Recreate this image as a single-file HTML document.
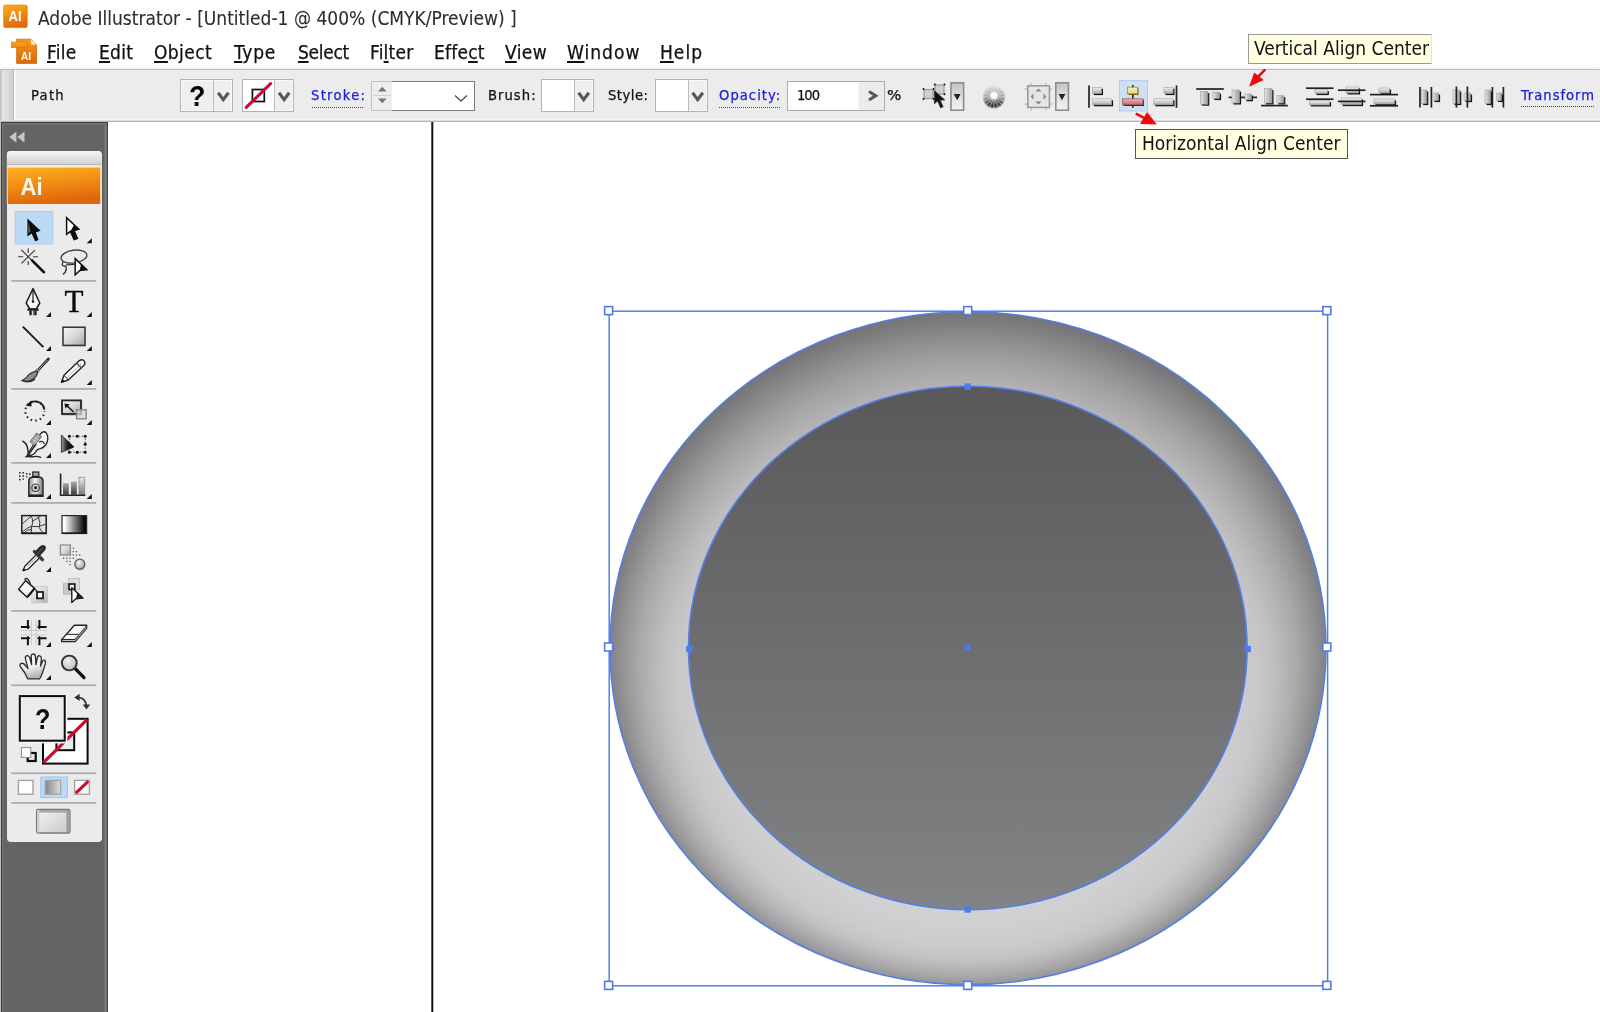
<!DOCTYPE html>
<html lang="en">
<head>
<meta charset="utf-8">
<title>Adobe Illustrator - [Untitled-1 @ 400% (CMYK/Preview) ]</title>
<style>
html,body{margin:0;padding:0}
body{width:1600px;height:1012px;position:relative;overflow:hidden;background:#fff;
  font-family:"DejaVu Sans Condensed","Liberation Sans",sans-serif;color:#111;}
.abs{position:absolute}
.t{position:absolute;white-space:pre;line-height:1;will-change:transform;-webkit-text-stroke:.25px currentColor}
#title{left:37.6px;top:9px;font-size:19px;color:#2e2e2e;-webkit-text-stroke:.1px currentColor}
.menu{top:43px;font-size:19px;color:#111}
.menu u{text-decoration:underline;text-underline-offset:2px;text-decoration-thickness:1.5px}
#cbar{left:0;top:68.6px;width:1600px;height:53.4px;background:linear-gradient(to bottom,#ececec 0,#ececec 48.4px,#f6f6f6 49.6px,#f4f4f4 50.2px,#bcbcbc 50.9px,#b6b6b6 51.5px,#d8d8d8 51.8px);border-top:1.6px solid #bebebe;box-sizing:border-box;box-shadow:0 -1.5px 2px rgba(0,0,0,.07)}
.cl{font-size:14.6px;top:88.2px;color:#111}
.lnk{color:#2020d8}
.dot{position:absolute;height:0;border-top:1.6px dotted #3434dc}
.box{position:absolute;box-sizing:border-box;border:1.2px solid #b2b2b8;background:#efefef;box-shadow:inset 0 0 0 1px #fafafa}
.tip{will-change:transform;position:absolute;box-sizing:border-box;background:#ffffe1;font-size:19px;line-height:1;white-space:pre;color:#111}
#dock{left:.9px;top:122.4px;width:106.9px;height:890px;background:#646464;border-top:1.6px solid #3f3f3f;border-left:1.2px solid #3f3f3f;border-right:1.8px solid #474747;box-sizing:border-box;box-shadow:inset 1.5px 1.5px 0 #727272,inset -3px 0 0 #747474}
#tools{left:7px;top:151px;width:95px;height:691px;background:#ebebeb;border-radius:4px;box-sizing:border-box}
.sep{position:absolute;left:11px;width:86px;height:2px;background:#b2b2b2}
</style>
</head>
<body>
<!-- TITLE -->
<div class="t" id="title">Adobe Illustrator - [Untitled-1 @ 400% (CMYK/Preview) ]</div>
<!-- MENU -->
<div class="t menu" style="left:47px;letter-spacing:.3px"><u>F</u>ile</div>
<div class="t menu" style="left:98.5px;letter-spacing:.3px"><u>E</u>dit</div>
<div class="t menu" style="left:154px;letter-spacing:.4px"><u>O</u>bject</div>
<div class="t menu" style="left:233.5px;letter-spacing:.8px"><u>T</u>ype</div>
<div class="t menu" style="left:297.5px;letter-spacing:-.3px"><u>S</u>elect</div>
<div class="t menu" style="left:369.5px;letter-spacing:.2px">Fi<u>l</u>ter</div>
<div class="t menu" style="left:433.5px;letter-spacing:.2px">Effe<u>c</u>t</div>
<div class="t menu" style="left:505px;letter-spacing:.4px"><u>V</u>iew</div>
<div class="t menu" style="left:567px;letter-spacing:1px"><u>W</u>indow</div>
<div class="t menu" style="left:660px;letter-spacing:1px"><u>H</u>elp</div>
<!-- CONTROL BAR -->
<div class="abs" id="cbar"></div>
<div class="abs" style="left:0;top:70.2px;width:2px;height:50px;background:#c6c6c6"></div>
<div class="abs" style="left:2px;top:70.2px;width:11.2px;height:49.6px;background:linear-gradient(to right,#e6e6e6,#cfcfcf)"></div>
<div class="abs" style="left:13.2px;top:70.2px;width:1.1px;height:49.6px;background:#bcbcbc"></div>
<div class="abs" style="left:14.3px;top:70.2px;width:1.3px;height:49.6px;background:#f8f8f8"></div>
<div class="t cl" style="left:31px;letter-spacing:1.3px">Path</div>
<!-- fill box -->
<div class="box" style="left:180px;top:79px;width:53px;height:33px"></div>
<div class="abs" style="left:213px;top:80px;width:1px;height:31px;background:#bdbdbd"></div>
<div class="t" style="left:188.6px;top:81.6px;font-size:29px;font-weight:bold;-webkit-text-stroke:0;transform:scaleX(.92);transform-origin:0 0;font-family:'Liberation Sans','DejaVu Sans',sans-serif;color:#000">?</div>
<!-- stroke box -->
<div class="box" style="left:242px;top:79px;width:52px;height:33px"></div>
<div class="abs" style="left:243px;top:80px;width:31px;height:31px;background:#fff"></div>
<div class="abs" style="left:274px;top:80px;width:1px;height:31px;background:#bdbdbd"></div>
<div class="t cl lnk" style="left:311px;letter-spacing:1.3px">Stroke:</div>
<div class="dot" style="left:312px;top:106.7px;width:51px"></div>
<!-- stroke combo -->
<div class="abs" style="left:371px;top:81px;width:22px;height:30px;box-sizing:border-box;border:1px solid #c2c2c2;background:#ededed"></div>
<div class="abs" style="left:374px;top:95px;width:17px;height:1px;background:#cfcfcf"></div>
<div class="abs" style="left:392px;top:81px;width:83px;height:30px;box-sizing:border-box;border:1.5px solid #7d7d7d;border-left:none;background:#fff"></div>
<div class="t cl" style="left:488px;letter-spacing:1.05px">Brush:</div>
<div class="box" style="left:541px;top:79px;width:53px;height:33px"></div>
<div class="abs" style="left:542px;top:80px;width:32px;height:31px;background:#fff"></div>
<div class="abs" style="left:574px;top:80px;width:1px;height:31px;background:#bdbdbd"></div>
<div class="t cl" style="left:608px;letter-spacing:.5px">Style:</div>
<div class="box" style="left:655px;top:79px;width:53px;height:33px"></div>
<div class="abs" style="left:656px;top:80px;width:32px;height:31px;background:#fff"></div>
<div class="abs" style="left:688px;top:80px;width:1px;height:31px;background:#bdbdbd"></div>
<div class="t cl lnk" style="left:719.4px;letter-spacing:1.05px">Opacity:</div>
<div class="dot" style="left:719px;top:106.7px;width:61px"></div>
<div class="abs" style="left:787px;top:81px;width:98px;height:30px;box-sizing:border-box;border:1px solid #ababab;background:linear-gradient(to right,#fff 0,#fff 70px,#ececec 71px,#ececec 100%)"></div>
<div class="t cl" style="left:797px;letter-spacing:-1px">100</div>
<div class="t cl" style="left:886.6px;transform:scaleX(1.15);transform-origin:0 0">%</div>
<div class="t cl lnk" style="left:1521px;letter-spacing:1px">Transform</div>
<div class="dot" style="left:1521px;top:105.6px;width:73px"></div>
<!-- tooltips -->
<div class="tip" style="left:1248px;top:34px;width:184px;height:30px;border:1px solid #9a9a9a;border-right-color:#e8e8c8;padding:3.8px 0 0 5px">Vertical Align Center</div>
<div class="tip" style="left:1135px;top:129px;width:213px;height:30px;border:1px solid #555;padding:3.5px 0 0 6px">Horizontal Align Center</div>
<!-- DOCK -->
<div class="abs" id="dock"></div>
<div class="abs" style="left:0;top:122px;width:.9px;height:890px;background:#c0c0c0"></div>
<div class="abs" id="tools"></div>
<!-- ARTWORK + ICONS -->
<svg class="abs" id="art" style="left:0;top:0;will-change:transform" width="1600" height="1012" viewBox="0 0 1600 1012">
<defs>
<radialGradient id="gOuter" gradientUnits="userSpaceOnUse" cx="968" cy="648" r="380" fx="968" fy="796.9" gradientTransform="translate(0 648) scale(1 0.94) translate(0 -648)">
  <stop offset="0.3" stop-color="#d8d8da"/>
  <stop offset="0.55" stop-color="#d2d2d4"/>
  <stop offset="0.66" stop-color="#cfcfd1"/>
  <stop offset="0.72" stop-color="#ccccce"/>
  <stop offset="0.76" stop-color="#c8c8ca"/>
  <stop offset="0.79" stop-color="#c3c3c5"/>
  <stop offset="0.81" stop-color="#bdbdbf"/>
  <stop offset="0.83" stop-color="#b6b6b8"/>
  <stop offset="0.85" stop-color="#afafb1"/>
  <stop offset="0.865" stop-color="#a9a9ab"/>
  <stop offset="0.88" stop-color="#a2a2a4"/>
  <stop offset="0.895" stop-color="#9b9b9d"/>
  <stop offset="0.91" stop-color="#939395"/>
  <stop offset="0.925" stop-color="#8b8b8d"/>
  <stop offset="0.94" stop-color="#838385"/>
  <stop offset="0.955" stop-color="#7d7d7f"/>
  <stop offset="1.0" stop-color="#777779"/>
</radialGradient>
<linearGradient id="gInner" x1="0" y1="0" x2="0" y2="1">
  <stop offset="0" stop-color="#59595b"/>
  <stop offset="1" stop-color="#828385"/>
</linearGradient>
<linearGradient id="gBar" x1="0" y1="0" x2="0" y2="1"><stop offset="0" stop-color="#f4f4f4"/><stop offset="1" stop-color="#a9a9a9"/></linearGradient>
<linearGradient id="gBarV" x1="0" y1="0" x2="1" y2="0"><stop offset="0" stop-color="#e6e6e6"/><stop offset="1" stop-color="#9c9c9c"/></linearGradient>
<linearGradient id="gYel" x1="0" y1="0" x2="0" y2="1"><stop offset="0" stop-color="#fbf3b8"/><stop offset="1" stop-color="#e6d27c"/></linearGradient>
<linearGradient id="gRed" x1="0" y1="0" x2="0" y2="1"><stop offset="0" stop-color="#eeb4b4"/><stop offset="1" stop-color="#c06a6a"/></linearGradient>
<linearGradient id="gDrop" x1="0" y1="0" x2="0" y2="1"><stop offset="0" stop-color="#c4c4c4"/><stop offset="0.5" stop-color="#dedede"/><stop offset="1" stop-color="#f4f4f4"/></linearGradient>
<linearGradient id="gWheel" x1="0" y1="0" x2="0" y2="1"><stop offset="0" stop-color="#dedede"/><stop offset="0.5" stop-color="#a6a6a6"/><stop offset="0.85" stop-color="#343434"/><stop offset="1" stop-color="#101010"/></linearGradient>
<radialGradient id="gWheelF"><stop offset="0.72" stop-color="#ebebeb" stop-opacity="0"/><stop offset="1" stop-color="#ebebeb" stop-opacity="1"/></radialGradient>
<radialGradient id="gWheelC"><stop offset="0" stop-color="#fff"/><stop offset="0.55" stop-color="#fff"/><stop offset="1" stop-color="#fff" stop-opacity="0"/></radialGradient>
<linearGradient id="gOr" x1="0" y1="0" x2="0.3" y2="1"><stop offset="0" stop-color="#fbb01c"/><stop offset="0.5" stop-color="#f08c12"/><stop offset="1" stop-color="#e26c0a"/></linearGradient>
<linearGradient id="gOr2" x1="0" y1="0" x2="0" y2="1"><stop offset="0" stop-color="#f59a18"/><stop offset="1" stop-color="#dc650a"/></linearGradient>
<linearGradient id="gOrTab" x1="0" y1="0" x2="0" y2="1"><stop offset="0" stop-color="#f8a624"/><stop offset="1" stop-color="#e8820e"/></linearGradient>
<linearGradient id="gGrip" x1="0" y1="0" x2="0" y2="1"><stop offset="0" stop-color="#f6f6f6"/><stop offset="1" stop-color="#cdced0"/></linearGradient>
<linearGradient id="gBand" x1="0" y1="0" x2="0.25" y2="1"><stop offset="0" stop-color="#fdb022"/><stop offset="0.5" stop-color="#f18e14"/><stop offset="1" stop-color="#e0660c"/></linearGradient>
<linearGradient id="gRectTool" x1="0" y1="0" x2="1" y2="1"><stop offset="0" stop-color="#f6f6f6"/><stop offset="0.5" stop-color="#d8d8d8"/><stop offset="1" stop-color="#a4a4a4"/></linearGradient>
<linearGradient id="gFT" x1="0" y1="0" x2="1" y2="0"><stop offset="0" stop-color="#9a9a9a"/><stop offset="0.45" stop-color="#222"/><stop offset="1" stop-color="#000"/></linearGradient>
<linearGradient id="gCan" x1="0" y1="0" x2="1" y2="0"><stop offset="0" stop-color="#8c8c8c"/><stop offset="0.45" stop-color="#f4f4f4"/><stop offset="1" stop-color="#7a7a7a"/></linearGradient>
<linearGradient id="gBarD" x1="0" y1="0" x2="0" y2="1"><stop offset="0" stop-color="#a8a8a8"/><stop offset="1" stop-color="#3c3c3c"/></linearGradient>
<linearGradient id="gBarL" x1="0" y1="0" x2="0" y2="1"><stop offset="0" stop-color="#eaeaea"/><stop offset="1" stop-color="#7c7c7c"/></linearGradient>
<linearGradient id="gBW" x1="0" y1="0" x2="1" y2="0"><stop offset="0.1" stop-color="#fff"/><stop offset="0.9" stop-color="#0a0a0a"/></linearGradient>
<radialGradient id="gBall" cx="0.4" cy="0.35" r="0.7"><stop offset="0" stop-color="#f4f4f4"/><stop offset="1" stop-color="#a0a0a0"/></radialGradient>
<linearGradient id="gHand" x1="0" y1="0" x2="0.3" y2="1"><stop offset="0" stop-color="#fff"/><stop offset="0.6" stop-color="#f0f0f0"/><stop offset="1" stop-color="#b4b4b4"/></linearGradient>
<radialGradient id="gLens" cx="0.4" cy="0.35" r="0.75"><stop offset="0" stop-color="#efefef"/><stop offset="1" stop-color="#b8b8b8"/></radialGradient>
<linearGradient id="gGradBtn" x1="0" y1="0" x2="1" y2="0"><stop offset="0" stop-color="#858585"/><stop offset="1" stop-color="#dedede"/></linearGradient>
<linearGradient id="gScreen" x1="0" y1="0" x2="1" y2="1"><stop offset="0" stop-color="#f4f4f4"/><stop offset="1" stop-color="#c8c8c8"/></linearGradient>
<linearGradient id="gTopShade" gradientUnits="userSpaceOnUse" x1="0" y1="312" x2="0" y2="640"><stop offset="0" stop-color="#000" stop-opacity="0.06"/><stop offset="0.3" stop-color="#000" stop-opacity="0.06"/><stop offset="1" stop-color="#000" stop-opacity="0"/></linearGradient>
</defs>
<!-- ARTWORK-BEGIN -->
<line x1="432.3" y1="122" x2="432.3" y2="1012" stroke="#111" stroke-width="2"/>
<ellipse cx="968" cy="648.2" rx="358" ry="336.5" fill="url(#gOuter)" stroke="#5480e6" stroke-width="1.6"/>
<ellipse cx="968" cy="648.2" rx="357.4" ry="336" fill="url(#gTopShade)"/>
<ellipse cx="967.8" cy="648" rx="279.3" ry="261.7" fill="url(#gInner)" stroke="#5480e6" stroke-width="1.6"/>
<rect x="609.2" y="311.2" width="718.4" height="674.6" fill="none" stroke="#5580e4" stroke-width="1.5"/>
<g fill="#fff" stroke="#4f7be2" stroke-width="1.6">
  <rect x="604.6" y="306.6" width="8" height="8"/><rect x="963.7" y="306.6" width="8" height="8"/><rect x="1322.8" y="306.6" width="8" height="8"/>
  <rect x="604.6" y="643" width="8" height="8"/><rect x="1322.8" y="643" width="8" height="8"/>
  <rect x="604.6" y="981.4" width="8" height="8"/><rect x="963.7" y="981.4" width="8" height="8"/><rect x="1322.8" y="981.4" width="8" height="8"/>
</g>
<g fill="#4a7df0">
  <rect x="964.5" y="383.4" width="6.4" height="6.4"/><rect x="964.5" y="906.3" width="6.4" height="6.4"/>
  <rect x="686.2" y="645.8" width="6.4" height="6.4"/><rect x="1244.5" y="645.8" width="6.4" height="6.4"/>
  <rect x="964.7" y="644.6" width="6" height="6"/>
</g>
<!-- ARTWORK-END -->
<!-- APPICONS-BEGIN -->
<g id="appicons" font-family="'Liberation Sans','DejaVu Sans',sans-serif" font-weight="bold" fill="#fff">
<rect x="4.2" y="6" width="23.4" height="22.2" rx="1.5" fill="#d9a060" opacity=".45"/>
<rect x="3.6" y="5" width="23.6" height="22.4" rx="1.5" fill="url(#gOr)" stroke="#e07a10" stroke-width=".6"/>
<text x="8.6" y="20.6" font-size="14.5" textLength="13" lengthAdjust="spacingAndGlyphs">AI</text>
<path d="M16.6,39.2 L31,39.2 L36.6,44.8 L36.6,63.4 L16.6,63.4 Z" fill="url(#gOr2)" stroke="#c85c08" stroke-width=".7"/>
<path d="M31,39.2 L36.6,44.8 L31,44.8 Z" fill="#fdf4e6" stroke="#e0b080" stroke-width=".5"/>
<rect x="11.4" y="42" width="15.6" height="5.8" fill="url(#gOrTab)" stroke="#d87410" stroke-width=".5"/>
<text x="21" y="59.6" font-size="11" textLength="10" lengthAdjust="spacingAndGlyphs">AI</text>
</g>
<!-- APPICONS-END -->
<!-- CBAR-ICONS-BEGIN -->
<g id="cbicons">
<polyline points="218.2,92.8 223.3,99.6 228.4,92.8" fill="none" stroke="#585858" stroke-width="3.1" stroke-linejoin="miter"/>
<polyline points="279,92.8 284.1,99.6 289.2,92.8" fill="none" stroke="#585858" stroke-width="3.1" stroke-linejoin="miter"/>
<polyline points="578.6,92.8 583.7,99.6 588.8,92.8" fill="none" stroke="#585858" stroke-width="3.1" stroke-linejoin="miter"/>
<polyline points="692.6,92.8 697.7,99.6 702.8,92.8" fill="none" stroke="#585858" stroke-width="3.1" stroke-linejoin="miter"/>
<polyline points="455,95.5 461.0,101 467,95.5" fill="none" stroke="#555" stroke-width="1.4" stroke-linejoin="miter"/>
<polyline points="869,91.4 875.8,95.7 869,100" fill="none" stroke="#585858" stroke-width="3"/>
<rect x="252.4" y="89.5" width="11.9" height="12" fill="none" stroke="#111" stroke-width="1.7"/>
<line x1="246.2" y1="107.4" x2="270.6" y2="83.6" stroke="#cc0a34" stroke-width="3" stroke-linecap="round"/>
<polygon points="378,91.6 382.3,86.8 386.6,91.6" fill="#747474"/><polygon points="378,98.4 382.3,103.2 386.6,98.4" fill="#747474"/>
<g><rect x="924" y="89.5" width="9" height="9" fill="#cfcfcf" stroke="#9a9a9a" stroke-width="1.2"/><rect x="935" y="85" width="9" height="9" fill="#cfcfcf" stroke="#9a9a9a" stroke-width="1.2"/><g fill="#111"><circle cx="923.5" cy="89" r="1"/><circle cx="933.5" cy="89" r="1"/><circle cx="923.5" cy="99" r="1"/><circle cx="933.5" cy="99" r="1"/><circle cx="934.8" cy="84.5" r="1"/><circle cx="944.5" cy="84.5" r="1"/><circle cx="944.5" cy="94.3" r="1"/></g><path d="M934.3,90.5 L934.3,104 L937.6,101 L940.6,108 L943.2,106.8 L940.2,100.2 L945,100 Z" fill="#111" stroke="#333" stroke-width="0.6"/></g>
<rect x="951.0" y="82.8" width="12.6" height="27.4" fill="url(#gDrop)" stroke="#8c8c8c" stroke-width="1.6"/>
<polygon points="953.8000000000001,94 960.6,94 957.2,100.3" fill="#222"/>
<rect x="1055.8" y="82.8" width="12.6" height="27.4" fill="url(#gDrop)" stroke="#8c8c8c" stroke-width="1.6"/>
<polygon points="1058.6,94 1065.4,94 1062,100.3" fill="#222"/>
<circle cx="994" cy="97" r="11.5" fill="url(#gWheel)"/>
<g stroke="#ebebeb" stroke-width="1" opacity=".55"><line x1="994" y1="97" x2="1006.0" y2="97.0"/><line x1="994" y1="97" x2="1005.1" y2="101.6"/><line x1="994" y1="97" x2="1002.5" y2="105.5"/><line x1="994" y1="97" x2="998.6" y2="108.1"/><line x1="994" y1="97" x2="994.0" y2="109.0"/><line x1="994" y1="97" x2="989.4" y2="108.1"/><line x1="994" y1="97" x2="985.5" y2="105.5"/><line x1="994" y1="97" x2="982.9" y2="101.6"/><line x1="994" y1="97" x2="982.0" y2="97.0"/><line x1="994" y1="97" x2="982.9" y2="92.4"/><line x1="994" y1="97" x2="985.5" y2="88.5"/><line x1="994" y1="97" x2="989.4" y2="85.9"/><line x1="994" y1="97" x2="994.0" y2="85.0"/><line x1="994" y1="97" x2="998.6" y2="85.9"/><line x1="994" y1="97" x2="1002.5" y2="88.5"/><line x1="994" y1="97" x2="1005.1" y2="92.4"/></g>
<circle cx="994" cy="95.6" r="4.6" fill="url(#gWheelC)"/><circle cx="994" cy="97" r="12.6" fill="url(#gWheelF)"/>
<g stroke="#b5b5b5" stroke-width="1.1"><line x1="1031" y1="82.5" x2="1031" y2="110.5"/><line x1="1046" y1="82.5" x2="1046" y2="110.5"/><line x1="1024.5" y1="89" x2="1052.5" y2="89"/><line x1="1024.5" y1="104" x2="1052.5" y2="104"/></g>
<rect x="1027.8" y="85.8" width="21.6" height="21.6" fill="#e6e6e6" stroke="#9c9c9c" stroke-width="1.6"/>
<g fill="#8a8a8a"><polygon points="1035.2,91.5 1041.8,91.5 1038.5,88.6"/><polygon points="1035.2,101.5 1041.8,101.5 1038.5,104.4"/><polygon points="1033.5,93.2 1033.5,99.8 1030.6,96.5"/><polygon points="1043.5,93.2 1043.5,99.8 1046.4,96.5"/></g>
<rect x="1119.5" y="80.5" width="28" height="30.5" fill="#cfdff3" stroke="#b4cdee" stroke-width="1"/>
<line x1="1089" y1="85.5" x2="1089" y2="107.8" stroke="#222" stroke-width="1.7"/>
<rect x="1093.9" y="88.8" width="9.1" height="6.3" fill="#161616"/><rect x="1092.4" y="87.3" width="9.099999999999909" height="6.299999999999997" fill="url(#gBar)" stroke="#a0a0a0" stroke-width="0.6"/>
<rect x="1093.9" y="100.3" width="19.2" height="6.0" fill="#161616"/><rect x="1092.4" y="98.8" width="19.199999999999818" height="6.0" fill="url(#gBar)" stroke="#a0a0a0" stroke-width="0.6"/>
<line x1="1132.8" y1="85" x2="1132.8" y2="107.8" stroke="#222" stroke-width="1.6"/>
<rect x="1128.5" y="88" width="10" height="7" fill="#6b5a1a"/><rect x="1127.6" y="87.2" width="10" height="6.6" fill="url(#gYel)" stroke="#9a8640" stroke-width="0.8"/>
<rect x="1123.6" y="99.8" width="20.4" height="6.2" fill="#3a1515"/><rect x="1122.6" y="98.8" width="20.4" height="6" fill="url(#gRed)" stroke="#a06060" stroke-width="0.8"/>
<line x1="1176.5" y1="85.5" x2="1176.5" y2="107.8" stroke="#222" stroke-width="1.7"/>
<rect x="1165.5" y="88.8" width="9.0" height="6.3" fill="#161616"/><rect x="1164" y="87.3" width="9" height="6.299999999999997" fill="url(#gBar)" stroke="#a0a0a0" stroke-width="0.6"/>
<rect x="1155.3" y="100.3" width="19.2" height="6.0" fill="#161616"/><rect x="1153.8" y="98.8" width="19.200000000000045" height="6.0" fill="url(#gBar)" stroke="#a0a0a0" stroke-width="0.6"/>
<line x1="1196.2" y1="89" x2="1223.8" y2="89" stroke="#222" stroke-width="1.7"/>
<rect x="1201.9" y="93.1" width="7.4" height="12.6" fill="#161616"/><rect x="1200.4" y="91.6" width="7.399999999999864" height="12.600000000000009" fill="url(#gBarV)" stroke="#a0a0a0" stroke-width="0.6"/>
<rect x="1214.3" y="93.7" width="6.8" height="6.4" fill="#161616"/><rect x="1212.8" y="92.2" width="6.7999999999999545" height="6.3999999999999915" fill="url(#gBarV)" stroke="#a0a0a0" stroke-width="0.6"/>
<line x1="1228.6" y1="97.4" x2="1257" y2="97.4" stroke="#222" stroke-width="1.7"/>
<rect x="1233.5" y="91.5" width="7.6" height="13.0" fill="#161616"/><rect x="1232" y="90" width="7.599999999999909" height="13" fill="url(#gBarV)" stroke="#a0a0a0" stroke-width="0.6"/>
<rect x="1246.5" y="95.5" width="6.4" height="5.8" fill="#161616"/><rect x="1245" y="94" width="6.400000000000091" height="5.799999999999997" fill="url(#gBarV)" stroke="#a0a0a0" stroke-width="0.6"/>
<line x1="1261" y1="105.6" x2="1287.8" y2="105.6" stroke="#222" stroke-width="1.7"/>
<rect x="1265.9" y="90.1" width="7.6" height="14.4" fill="#161616"/><rect x="1264.4" y="88.6" width="7.599999999999909" height="14.400000000000006" fill="url(#gBarV)" stroke="#a0a0a0" stroke-width="0.6"/>
<rect x="1278.5" y="97.1" width="6.8" height="7.4" fill="#161616"/><rect x="1277" y="95.6" width="6.7999999999999545" height="7.400000000000006" fill="url(#gBarV)" stroke="#a0a0a0" stroke-width="0.6"/>
<line x1="1306" y1="88.2" x2="1333.5" y2="88.2" stroke="#222" stroke-width="1.7"/>
<line x1="1306" y1="99.2" x2="1333.5" y2="99.2" stroke="#222" stroke-width="1.7"/>
<rect x="1316.5" y="91.1" width="12.4" height="4.0" fill="#161616"/><rect x="1315" y="89.6" width="12.400000000000091" height="4.0" fill="url(#gBar)" stroke="#a0a0a0" stroke-width="0.6"/>
<rect x="1310.9" y="102.1" width="20.2" height="4.4" fill="#161616"/><rect x="1309.4" y="100.6" width="20.199999999999818" height="4.400000000000006" fill="url(#gBar)" stroke="#a0a0a0" stroke-width="0.6"/>
<rect x="1347.5" y="88.5" width="12.6" height="6.0" fill="#161616"/><rect x="1346" y="87" width="12.599999999999909" height="6" fill="url(#gBar)" stroke="#a0a0a0" stroke-width="0.6"/>
<rect x="1342.7" y="99.5" width="20.4" height="6.6" fill="#161616"/><rect x="1341.2" y="98" width="20.399999999999864" height="6.599999999999994" fill="url(#gBar)" stroke="#a0a0a0" stroke-width="0.6"/>
<line x1="1338" y1="90.2" x2="1365.5" y2="90.2" stroke="#222" stroke-width="1.7"/>
<line x1="1338" y1="101.4" x2="1365.5" y2="101.4" stroke="#222" stroke-width="1.7"/>
<line x1="1370" y1="94.6" x2="1398" y2="94.6" stroke="#222" stroke-width="1.7"/>
<line x1="1370" y1="105.8" x2="1398" y2="105.8" stroke="#222" stroke-width="1.7"/>
<rect x="1380.5" y="89.5" width="10.6" height="5.0" fill="#161616"/><rect x="1379" y="88" width="10.599999999999909" height="5" fill="url(#gBar)" stroke="#a0a0a0" stroke-width="0.6"/>
<rect x="1375.5" y="100.5" width="20.6" height="5.0" fill="#161616"/><rect x="1374" y="99" width="20.59999999999991" height="5" fill="url(#gBar)" stroke="#a0a0a0" stroke-width="0.6"/>
<line x1="1420" y1="87" x2="1420" y2="107.6" stroke="#222" stroke-width="1.7"/>
<line x1="1431.4" y1="87" x2="1431.4" y2="107.6" stroke="#222" stroke-width="1.7"/>
<rect x="1423.1" y="91.5" width="5.2" height="13.6" fill="#161616"/><rect x="1421.6" y="90" width="5.2000000000000455" height="13.599999999999994" fill="url(#gBarV)" stroke="#a0a0a0" stroke-width="0.6"/>
<rect x="1434.5" y="94.5" width="5.6" height="7.6" fill="#161616"/><rect x="1433" y="93" width="5.599999999999909" height="7.599999999999994" fill="url(#gBarV)" stroke="#a0a0a0" stroke-width="0.6"/>
<rect x="1454.5" y="91.5" width="6.8" height="13.6" fill="#161616"/><rect x="1453" y="90" width="6.7999999999999545" height="13.599999999999994" fill="url(#gBarV)" stroke="#a0a0a0" stroke-width="0.6"/>
<rect x="1465.5" y="94.5" width="6.6" height="7.6" fill="#161616"/><rect x="1464" y="93" width="6.599999999999909" height="7.599999999999994" fill="url(#gBarV)" stroke="#a0a0a0" stroke-width="0.6"/>
<line x1="1456.4" y1="86.5" x2="1456.4" y2="107.6" stroke="#222" stroke-width="1.7"/>
<line x1="1467.4" y1="86.5" x2="1467.4" y2="107.6" stroke="#222" stroke-width="1.7"/>
<line x1="1492.4" y1="87" x2="1492.4" y2="107.6" stroke="#222" stroke-width="1.7"/>
<line x1="1503.4" y1="87" x2="1503.4" y2="107.6" stroke="#222" stroke-width="1.7"/>
<rect x="1486.5" y="91.5" width="5.6" height="13.6" fill="#161616"/><rect x="1485" y="90" width="5.599999999999909" height="13.599999999999994" fill="url(#gBarV)" stroke="#a0a0a0" stroke-width="0.6"/>
<rect x="1497.9" y="94.5" width="5.2" height="7.6" fill="#161616"/><rect x="1496.4" y="93" width="5.199999999999818" height="7.599999999999994" fill="url(#gBarV)" stroke="#a0a0a0" stroke-width="0.6"/>
<g fill="#ee0a0a" stroke="none"><line x1="1265.3" y1="69.4" x2="1257" y2="77.8" stroke="#ee0a0a" stroke-width="2.6"/><polygon points="1249.1,86.8 1254.2,72.6 1263.7,79.9"/><line x1="1135.8" y1="113.6" x2="1146" y2="118.8" stroke="#ee0a0a" stroke-width="2.6"/><polygon points="1156.9,124.6 1147,111.9 1140.1,123.9"/></g>
</g>
<!-- CBAR-ICONS-END -->
<!-- TOOLS-BEGIN -->
<g id="tools-svg">
<!-- dock arrows -->
<polygon points="9.4,137 16.4,131.4 16.4,142.8" fill="#c6c6c6"/><polygon points="17.4,137 24.5,131.4 24.5,142.8" fill="#c6c6c6"/>
<!-- header grip + orange band -->
<path d="M6.8,165 L6.8,154.5 Q6.8,151 10.3,151 L98,151 Q101.5,151 101.5,154.5 L101.5,165 Z" fill="url(#gGrip)"/>
<rect x="6.8" y="164" width="94.7" height="1.2" fill="#b4b8bc"/>
<rect x="6.8" y="165.2" width="94.7" height="2.4" fill="#fbe9d2"/>
<rect x="8" y="167.6" width="92.2" height="36.4" fill="url(#gBand)"/>
<rect x="6.8" y="167.6" width="1.2" height="36.4" fill="#f8d0a0"/><rect x="100.2" y="167.6" width="1.3" height="36.4" fill="#f8d0a0"/>
<text x="20.6" y="194.6" font-family="'Liberation Sans','DejaVu Sans',sans-serif" font-weight="bold" font-size="24" fill="#fff8ea" textLength="22" lengthAdjust="spacingAndGlyphs">Ai</text>
<!-- separators -->
<g fill="#adadad">
<rect x="11.2" y="280" width="85" height="1.8"/><rect x="11.2" y="388" width="85" height="1.8"/><rect x="11.2" y="462" width="85" height="1.8"/>
<rect x="11.2" y="502" width="85" height="1.8"/><rect x="11.2" y="610" width="85" height="1.8"/><rect x="11.2" y="684.4" width="85" height="1.8"/>
<rect x="11.2" y="772.4" width="85" height="1.8"/><rect x="11.2" y="802" width="85" height="1.8"/>
</g>
<!-- flyout corner triangles -->
<g fill="#111">
<polygon points="91.8,238.2 91.8,243.2 86.7,243.2"/>
<polygon points="51,312 51,317 46,317"/><polygon points="91.8,312 91.8,317 86.7,317"/>
<polygon points="51,346 51,351 46,351"/><polygon points="91.8,346 91.8,351 86.7,351"/>
<polygon points="91.8,380 91.8,385 86.7,385"/>
<polygon points="51,420 51,425 46,425"/><polygon points="91.8,420 91.8,425 86.7,425"/>
<polygon points="51,453 51,458 46,458"/>
<polygon points="51,494 51,499 46,499"/><polygon points="91.8,494 91.8,499 86.7,499"/>
<polygon points="51,567 51,572 46,572"/>
<polygon points="51,642 51,647 46,647"/><polygon points="91.8,642 91.8,647 86.7,647"/>
<polygon points="51,675 51,680 46,680"/>
</g>
<!-- row1: selection tools -->
<rect x="15.2" y="211.6" width="37.6" height="32.4" fill="#bcdaf5" stroke="#a2ccf2" stroke-width="1"/>
<path d="M27.4,218.6 L27.4,236.4 L31.6,233.4 L35.2,241.2 L38.6,240 L35.8,232.4 L40.6,230.8 Z" fill="#0a0a0a"/>
<path d="M28.4,222 L28.4,233.6 L30.6,231.6 Z" fill="#8a8a8a" opacity=".7"/>
<path d="M66.6,217.8 L66.6,234.2 L70.4,231.4 L74.2,239.6 L77.4,238.4 L74,230.6 L78.8,229.2 Z" fill="#fff" stroke="#0a0a0a" stroke-width="1.5" stroke-linejoin="miter"/>
<path d="M70.4,231.4 L74.2,239.6 L77.4,238.4 L74,230.6 L78.8,229.2 L74,225" fill="#0a0a0a"/>
<!-- row2: magic wand -->
<g stroke="#333" stroke-width="1.1" stroke-linecap="round">
<line x1="28.2" y1="248.8" x2="28.2" y2="252.5"/><line x1="28.2" y1="261.5" x2="28.2" y2="264.6"/>
<line x1="18.6" y1="256.8" x2="22.8" y2="256.8"/><line x1="33.6" y1="256.8" x2="37.6" y2="256.8"/>
<line x1="21.6" y1="250.2" x2="34.8" y2="263.4"/><line x1="34.6" y1="250.4" x2="21.8" y2="263.2"/>
</g>
<line x1="32" y1="260.4" x2="44" y2="272.2" stroke="#111" stroke-width="2.6" stroke-linecap="round"/>
<!-- lasso -->
<ellipse cx="74" cy="256.6" rx="13" ry="6.4" transform="rotate(-8 74 256.6)" fill="none" stroke="#444" stroke-width="1.3"/>
<path d="M63,262 Q61,266 64.4,266 Q67,266 66,270 Q65.4,273 63,274.4" fill="none" stroke="#333" stroke-width="1.4"/>
<path d="M66,264.8 L74.5,264.4" stroke="#333" stroke-width="1.2"/>
<path d="M75.2,258.6 L75.2,274.8 L79.6,270.6 L86.8,269.8 Z" fill="#fff" stroke="#111" stroke-width="1.5"/>
<path d="M79.6,270.6 L86.8,269.8 L81,264.4 Z" fill="#111"/>
</g>
<!-- TOOLS-END -->
<!-- TOOLS2-BEGIN -->
<g id="tools-svg2">
<!-- row3: pen -->
<path d="M33,288.6 L26.2,303 L29.8,309 L36.2,309 L39.8,303 Z" fill="#fafafa" stroke="#1a1a1a" stroke-width="1.5" stroke-linejoin="round"/>
<line x1="33" y1="289" x2="33" y2="300.4" stroke="#1a1a1a" stroke-width="1.2"/><circle cx="33" cy="301.6" r="1.3" fill="#1a1a1a"/>
<rect x="27.4" y="308.6" width="11.2" height="2.2" fill="#1a1a1a"/>
<rect x="29.6" y="310.8" width="6.8" height="4.4" fill="#555"/><rect x="32" y="310.8" width="1.2" height="4.4" fill="#ddd"/><rect x="29.6" y="310.8" width="1.4" height="4.4" fill="#111"/><rect x="35" y="310.8" width="1.4" height="4.4" fill="#111"/>
<!-- T -->
<text x="64.6" y="312.4" font-family="'Liberation Serif','DejaVu Serif',serif" font-size="31" fill="#0a0a0a" stroke="#0a0a0a" stroke-width=".35" textLength="19" lengthAdjust="spacingAndGlyphs">T</text>
<!-- row4: line, rect -->
<line x1="22.8" y1="326.6" x2="43.4" y2="347.2" stroke="#1a1a1a" stroke-width="1.9"/>
<rect x="63.6" y="328.2" width="22.4" height="18.6" fill="#bdbdbd" opacity=".6"/>
<rect x="63" y="327.2" width="22" height="18.2" fill="url(#gRectTool)" stroke="#333" stroke-width="1.5"/>
<!-- row5: brush -->
<path d="M48.4,359 L37.6,370.6" stroke="#222" stroke-width="2.6" stroke-linecap="round"/>
<path d="M47.6,359.8 L38.2,370" stroke="#bbb" stroke-width="0.9"/>
<path d="M38.6,369.6 L35.6,372.6" stroke="#888" stroke-width="4"/>
<path d="M36.6,371 Q30,372.6 26.6,377 Q24.4,379.6 22,380.4 Q29,382.6 33.8,378.8 Q37.4,375.6 37.6,372 Z" fill="#8c8c8c" stroke="#2a2a2a" stroke-width="1.1"/>
<path d="M23,380.8 Q29,383.4 35,379" stroke="#333" stroke-width="1.6" fill="none"/>
<!-- pencil -->
<path d="M61.4,382.4 L64,375.2 L79.4,360.6 Q82.6,358.6 84.6,361.6 Q85.6,363.6 83.8,365.4 L68.2,380 Z" fill="#fbfbfb" stroke="#222" stroke-width="1.4" stroke-linejoin="round"/>
<path d="M64,375.2 L68.2,380" stroke="#222" stroke-width="1"/>
<path d="M61.4,382.4 L62.6,379 L64.8,381.2 Z" fill="#111"/>
<path d="M76.6,363.2 L81.6,368" stroke="#555" stroke-width="1.6"/>
<path d="M66.4,378 L81.6,363.6" stroke="#aaa" stroke-width="1"/>
<!-- row6: rotate -->
<circle cx="34.9" cy="411" r="9.6" fill="none" stroke="#222" stroke-width="2" stroke-dasharray="1.6 3.1" stroke-dashoffset="1"/>
<path d="M29.4,403.2 A9.6,9.6 0 0 1 44.4,409.6" fill="none" stroke="#222" stroke-width="1.9"/>
<polygon points="25.6,405.6 31.6,400.6 31.4,406.6" fill="#111"/>
<!-- scale -->
<rect x="62.6" y="401" width="20" height="15" fill="#b5b5b5" opacity=".6"/>
<rect x="62" y="400.4" width="19" height="13.6" fill="url(#gRectTool)" stroke="#222" stroke-width="1.8"/>
<line x1="73.6" y1="412" x2="66.2" y2="405" stroke="#111" stroke-width="1.5"/><polygon points="64.4,403.4 69.6,404.2 65.4,408.4" fill="#111"/>
<rect x="76.6" y="409.8" width="9.6" height="9" fill="#d8d8d8" fill-opacity=".75" stroke="#858585" stroke-width="1.4"/>
<!-- row7: warp -->
<path d="M22.4,441 Q27,443 28,450 Q28.6,455 26.4,456.6 L33,456.8 Q37,455.6 41,457.6" fill="none" stroke="#222" stroke-width="1.4"/>
<path d="M29,452 L40.6,433.6 Q43.6,430.6 46,432.6 Q48.6,436 47.4,441 Q46,447 40.4,448.6 Q36.6,449 35.6,452 Q33,456 29,455.4 Z" fill="#f4f4f4" stroke="#222" stroke-width="1.3"/>
<path d="M30,441.6 L36.6,433 L41.6,436.6 L34.6,446 Z" fill="#9a9a9a" stroke="#555" stroke-width=".7"/>
<path d="M32,439 L38.4,443.6 M34,436.4 L40,441 M33,443.4 L38.8,435" stroke="#eee" stroke-width=".6"/>
<path d="M39,442 Q43,440 44.4,444" fill="none" stroke="#222" stroke-width="1.2"/>
<path d="M27.6,455.8 L36,444.6" stroke="#333" stroke-width="1.6"/>
<!-- free transform -->
<rect x="69.4" y="436.2" width="15.8" height="16" fill="none" stroke="#555" stroke-width="1" stroke-dasharray="1.5 1.5"/>
<g fill="#0a0a0a"><circle cx="69.4" cy="436.2" r="1.5"/><circle cx="77.3" cy="436.2" r="1.5"/><circle cx="85.2" cy="436.2" r="1.5"/><circle cx="85.2" cy="444.2" r="1.5"/><circle cx="85.2" cy="452.2" r="1.5"/><circle cx="77.3" cy="452.2" r="1.5"/><circle cx="69.4" cy="452.2" r="1.5"/></g>
<polygon points="61.4,435 61.4,452.4 74,447" fill="url(#gFT)" stroke="#222" stroke-width=".8"/>
<!-- row8: sprayer -->
<g fill="#333"><rect x="19" y="472" width="1.6" height="1.6"/><rect x="22.4" y="472" width="1.6" height="1.6"/><rect x="25.8" y="473" width="1.6" height="1.6"/><rect x="29" y="473.4" width="1.6" height="1.6"/>
<rect x="19" y="475.4" width="1.6" height="1.6"/><rect x="22.4" y="475.2" width="1.6" height="1.6"/><rect x="26" y="476" width="1.4" height="1.4"/><rect x="19" y="478.8" width="1.6" height="1.6"/><rect x="22.6" y="478.4" width="1.4" height="1.4"/></g>
<rect x="32.8" y="472" width="6" height="4.4" fill="#aaa" stroke="#222" stroke-width="1.2"/>
<path d="M28.8,481 Q28.8,477.2 32.6,477.2 L39.2,477.2 Q43,477.2 43,481 L43,496.2 L28.8,496.2 Z" fill="url(#gCan)" stroke="#222" stroke-width="1.4"/>
<circle cx="35.6" cy="487.8" r="3.8" fill="#d0d0d0" stroke="#444" stroke-width="1.2"/><circle cx="35.6" cy="487.8" r="1.5" fill="#111"/>
<rect x="28.8" y="494.4" width="14.2" height="2" fill="#222"/>
<!-- graph -->
<rect x="63" y="483.2" width="5.8" height="11.4" fill="url(#gBarD)"/><rect x="71" y="481.6" width="5.8" height="13" fill="url(#gBarD)"/><rect x="79" y="477.2" width="5.8" height="17.4" fill="url(#gBarL)" stroke="#777" stroke-width=".6"/>
<path d="M60.6,473.6 L60.6,495.2 L85.4,495.2" fill="none" stroke="#222" stroke-width="1.6"/>
<!-- row9: mesh -->
<rect x="22.4" y="516.6" width="24.8" height="18.4" fill="#bdbdbd" opacity=".55"/>
<rect x="21.8" y="515.6" width="24.4" height="17.8" fill="#e2e2e2" stroke="#1e1e1e" stroke-width="1.5"/>
<path d="M22,524 Q28,519 31.4,516 M31,516 Q34,520 31.6,527 Q31,530 31.6,533 M31.8,521.6 Q38,518 40.6,516 M32,526 Q26,528 22.6,532 M31.8,526.4 Q39,528 46,524 M38,516.4 Q41,522 39.4,527.6 Q40.6,531 43.6,533 M24,533 Q27,529 31.4,529.6" fill="none" stroke="#3a3a3a" stroke-width="1"/>
<rect x="21.8" y="532.4" width="24.4" height="1.6" fill="#1a1a1a"/>
<!-- gradient -->
<rect x="62.8" y="516.6" width="24.8" height="18.4" fill="#bdbdbd" opacity=".55"/>
<rect x="62" y="515.6" width="24.6" height="17.8" fill="url(#gBW)" stroke="#2a2a2a" stroke-width="1.2"/>
<rect x="62" y="532.4" width="24.6" height="1.6" fill="#1a1a1a"/>
<!-- row10: eyedropper -->
<path d="M23,570.6 L25,566 L36.4,554.6 L39.6,557.8 L28,569.2 Z" fill="#f6f6f6" stroke="#222" stroke-width="1.3" stroke-linejoin="round"/>
<path d="M27.6,566 L37,556.8" stroke="#9a9a9a" stroke-width="1"/>
<path d="M34.4,551.6 L42.4,559.6" stroke="#3a3a3a" stroke-width="3.4" stroke-linecap="round"/>
<path d="M38.6,555.4 L43,550.6 Q45.6,547.6 44,546.6 Q42,545.4 39.4,548.6 L35.6,552.8" fill="#4a4a4a" stroke="#2a2a2a" stroke-width="2.6" stroke-linejoin="round"/>
<path d="M23,570.6 L24.6,569" stroke="#111" stroke-width="1.6"/>
<!-- blend -->
<rect x="60.4" y="545" width="10" height="10" fill="url(#gRectTool)" stroke="#8a8a8a" stroke-width="1.3"/>
<g fill="#555"><rect x="72.6" y="547.6" width="1.3" height="1.3"/><rect x="72.6" y="551" width="1.3" height="1.3"/><rect x="75.8" y="551" width="1.3" height="1.3"/><rect x="72.6" y="554.4" width="1.3" height="1.3"/><rect x="75.8" y="554.4" width="1.3" height="1.3"/><rect x="79" y="554.4" width="1.3" height="1.3"/>
<rect x="63" y="557.6" width="1.3" height="1.3"/><rect x="66.2" y="557.6" width="1.3" height="1.3"/><rect x="69.4" y="557.6" width="1.3" height="1.3"/><rect x="72.6" y="557.6" width="1.3" height="1.3"/><rect x="66.2" y="560.8" width="1.3" height="1.3"/><rect x="69.4" y="560.8" width="1.3" height="1.3"/><rect x="69.4" y="564" width="1.3" height="1.3"/></g>
<circle cx="80.4" cy="565" r="5.2" fill="#999" opacity=".6"/>
<circle cx="79.8" cy="564.2" r="5" fill="url(#gBall)" stroke="#5a5a5a" stroke-width="1.3"/>
<!-- row11: live paint bucket -->
<rect x="31.8" y="586.4" width="15.8" height="16.4" fill="url(#gRectTool)" stroke="#c4c4c4" stroke-width=".8" opacity=".9"/>
<rect x="37" y="592" width="6" height="6.4" fill="#fff" stroke="#111" stroke-width="1.7"/>
<path d="M25.6,580.6 L34.6,588.4 L27.2,597.2 L18.6,589.4 Z" fill="#f8f8f8" stroke="#222" stroke-width="1.5" stroke-linejoin="round"/>
<path d="M25.6,580.6 Q24,577.8 26.6,578.4 Q29,579.4 30.6,584.6" fill="none" stroke="#222" stroke-width="1.2"/>
<path d="M34.6,588.4 Q38,589.6 38.4,593.6 L36,591.6 Z" fill="#222"/>
<path d="M27.2,597.2 L34.6,588.4" stroke="#111" stroke-width="2"/>
<!-- live paint selection -->
<rect x="63.6" y="583.6" width="9.6" height="10.6" fill="#c9c9c9" stroke="#b0b0b0" stroke-width=".8"/>
<rect x="68.6" y="578.6" width="11" height="11.2" fill="#dcdcdc" stroke="#bcbcbc" stroke-width=".8"/>
<rect x="69" y="584" width="5.8" height="5.6" fill="#eee" stroke="#111" stroke-width="1.6"/>
<path d="M71.8,587.8 L71.8,602.6 L75.8,598.8 L83,598 Z" fill="#fff" stroke="#111" stroke-width="1.3" stroke-linejoin="round"/>
<path d="M75.8,598.8 L83,598 L77.4,592.8 Z" fill="#222"/>
<!-- row12: crop area -->
<g stroke="#c8c8c8" stroke-width="1"><line x1="21" y1="630.4" x2="46.6" y2="630.4"/><line x1="21" y1="635" x2="46.6" y2="635"/><line x1="31.4" y1="620" x2="31.4" y2="645"/><line x1="36" y1="620" x2="36" y2="645"/></g>
<g stroke="#111" stroke-width="2" fill="none"><path d="M21,627 L27.9,627 L27.9,620"/><path d="M46.6,627 L39.4,627 L39.4,620"/><path d="M21,638.2 L27.9,638.2 L27.9,645.2"/><path d="M46.6,638.2 L39.4,638.2 L39.4,645.2"/>
<path d="M27.9,627 L30,627 M27.9,627 L27.9,629 M39.4,627 L37.4,627 M39.4,627 L39.4,629 M27.9,638.2 L30,638.2 M27.9,638.2 L27.9,636.2 M39.4,638.2 L37.4,638.2 M39.4,638.2 L39.4,636.2" stroke-width="1.6"/></g>
<!-- eraser -->
<path d="M74.4,625.2 L86.6,625.2 L86.6,628.4 L75.2,641.6 L61.6,641.6 L61.8,639.4 Z" fill="#f7f7f7" stroke="#222" stroke-width="1.4" stroke-linejoin="round"/>
<path d="M62,639.6 L75,639.6 L86.4,626" fill="none" stroke="#222" stroke-width="1.1"/>
<path d="M66.8,634.4 L78.4,634.4" stroke="#333" stroke-width="1.1"/>
<path d="M75.2,641.2 L86.4,628.4 L86.4,626 L75,639.6 Z" fill="#8a8a8a"/>
<!-- row13: hand -->
<path d="M27.6,678.8 Q25,672 20.6,667 Q19,664.4 21.2,663.4 Q23.6,662.6 26.2,666.4 L28,668.6 L25.4,658.6 Q25,656 27,655.6 Q29,655.4 29.8,658 L31.6,664.6 L31.2,656 Q31.4,654 33.2,654 Q35.2,654 35.4,656.4 L36,664.6 L37.4,657.4 Q38,655.4 39.8,655.8 Q41.6,656.4 41.4,658.8 L40.6,666 L42.4,661.4 Q43.4,659.6 44.8,660.4 Q46,661.2 45.4,663.4 L42.6,672.6 Q41,677 39.6,678.8 Z" fill="url(#gHand)" stroke="#2a2a2a" stroke-width="1.3" stroke-linejoin="round"/>
<!-- zoom -->
<line x1="75" y1="668.4" x2="84" y2="677.6" stroke="#111" stroke-width="3.4" stroke-linecap="round"/>
<circle cx="69.3" cy="663" r="7.4" fill="url(#gLens)" stroke="#333" stroke-width="1.9"/>
</g>
<!-- TOOLS2-END -->
<!-- TOOLS3-BEGIN -->
<g id="tools-svg3">
<!-- stroke box -->
<rect x="43" y="718.8" width="44.6" height="44.8" fill="#fff" stroke="#0a0a0a" stroke-width="2"/>
<rect x="56.4" y="732.4" width="17.8" height="17.8" fill="#ececec" stroke="#0a0a0a" stroke-width="2"/>
<line x1="43.4" y1="762.6" x2="87" y2="719.6" stroke="#cc0a32" stroke-width="3.2"/>
<!-- fill box -->
<rect x="18.4" y="694.8" width="49" height="48.6" fill="#f6f6f6"/>
<rect x="19.8" y="696.1" width="44.9" height="44.6" fill="#ececec" stroke="#0a0a0a" stroke-width="2"/>
<text x="35" y="729.4" font-family="'Liberation Sans','DejaVu Sans',sans-serif" font-weight="bold" font-size="29" fill="#0a0a0a" textLength="15.4" lengthAdjust="spacingAndGlyphs">?</text>
<!-- swap arrows -->
<path d="M77.6,697.4 Q85.6,697.6 86.4,706" fill="none" stroke="#333" stroke-width="1.8"/>
<polygon points="74.2,697.4 79.6,693.8 79.6,701" fill="#333"/><polygon points="86.4,709.6 82.8,704.4 90.2,704.4" fill="#333"/>
<!-- default colors icon -->
<rect x="27.7" y="753" width="8" height="8" fill="#ececec" stroke="#0a0a0a" stroke-width="2.2"/>
<rect x="21.4" y="747.6" width="9.4" height="9.8" fill="#fff" stroke="#8c8c8c" stroke-width="1"/>
<!-- color / gradient / none -->
<rect x="18.4" y="780.4" width="14.6" height="13.8" fill="#fff" stroke="#a2a2a2" stroke-width="1.4"/>
<rect x="40.8" y="777" width="26.6" height="20.6" fill="#bcdaf5" stroke="#9ecbf4" stroke-width="1.2"/>
<rect x="45.2" y="780.4" width="15.4" height="13.8" fill="url(#gGradBtn)" stroke="#a2a2a2" stroke-width="1.2"/>
<rect x="74.6" y="780.4" width="14.8" height="13.8" fill="#fff" stroke="#a2a2a2" stroke-width="1.4"/>
<line x1="75.8" y1="793.2" x2="88.4" y2="781.2" stroke="#cc0a32" stroke-width="3"/>
<!-- screen mode -->
<rect x="36.6" y="809.4" width="33.4" height="23.6" rx="1.5" fill="url(#gScreen)" stroke="#7a7a7a" stroke-width="1.3"/>
<rect x="37.2" y="810" width="32.2" height="2.6" fill="#a8a8a8"/>
<rect x="66.4" y="810" width="3" height="22.4" fill="#9c9c9c"/><rect x="37.2" y="810" width="2.2" height="22.4" fill="#d0d0d0"/>
</g>
<!-- TOOLS3-END -->
</svg>
</body>
</html>
